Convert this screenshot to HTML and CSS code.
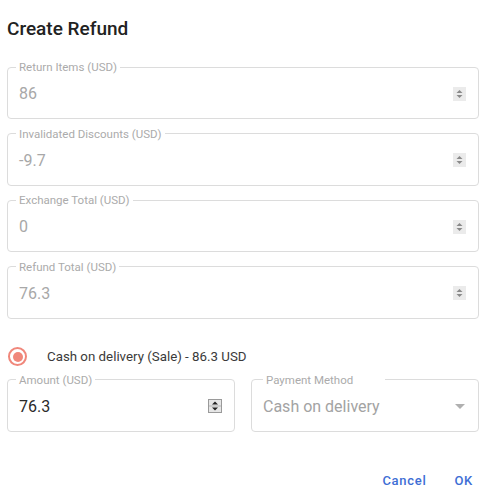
FILE: index.html
```html
<!DOCTYPE html>
<html>
<head>
<meta charset="utf-8">
<link rel="stylesheet" href="styles.css">
</head>
<body>
<div class="dialog">
  <h2 class="title">Create Refund</h2>
  <div class="fields">
    <fieldset class="field disabled">
      <legend>Return Items (USD)</legend>
      <div class="row"><span class="value">86</span>
        <svg class="spin" width="13" height="14" viewBox="0 0 13 14"><rect width="13" height="14" fill="#ebebeb"/><path d="M3.5 6 L6.5 3 L9.5 6Z" fill="#8a8a8a"/><path d="M3.5 8 L6.5 11 L9.5 8Z" fill="#8a8a8a"/></svg>
      </div>
    </fieldset>
    <fieldset class="field disabled">
      <legend>Invalidated Discounts (USD)</legend>
      <div class="row"><span class="value">-9.7</span>
        <svg class="spin" width="13" height="14" viewBox="0 0 13 14"><rect width="13" height="14" fill="#ebebeb"/><path d="M3.5 6 L6.5 3 L9.5 6Z" fill="#8a8a8a"/><path d="M3.5 8 L6.5 11 L9.5 8Z" fill="#8a8a8a"/></svg>
      </div>
    </fieldset>
    <fieldset class="field disabled">
      <legend>Exchange Total (USD)</legend>
      <div class="row"><span class="value">0</span>
        <svg class="spin" width="13" height="14" viewBox="0 0 13 14"><rect width="13" height="14" fill="#ebebeb"/><path d="M3.5 6 L6.5 3 L9.5 6Z" fill="#8a8a8a"/><path d="M3.5 8 L6.5 11 L9.5 8Z" fill="#8a8a8a"/></svg>
      </div>
    </fieldset>
    <fieldset class="field disabled">
      <legend>Refund Total (USD)</legend>
      <div class="row"><span class="value">76.3</span>
        <svg class="spin" width="13" height="14" viewBox="0 0 13 14"><rect width="13" height="14" fill="#ebebeb"/><path d="M3.5 6 L6.5 3 L9.5 6Z" fill="#8a8a8a"/><path d="M3.5 8 L6.5 11 L9.5 8Z" fill="#8a8a8a"/></svg>
      </div>
    </fieldset>
  </div>

  <div class="radio-row">
    <span class="radio"><span class="dot"></span></span>
    <span class="radio-label">Cash on delivery (Sale) - 86.3 USD</span>
  </div>

  <div class="pay-row">
    <fieldset class="field">
      <legend>Amount (USD)</legend>
      <div class="row"><span class="value active">76.3</span>
        <svg class="spin" width="14" height="14" viewBox="0 0 14 14"><rect x="0.5" y="0.5" width="13" height="13" fill="#e6e6e6" stroke="#9a9a9a"/><line x1="1" y1="7" x2="13" y2="7" stroke="#b5b5b5"/><path d="M4 5.5 L7 2.5 L10 5.5Z" fill="#222"/><path d="M4 8.5 L7 11.5 L10 8.5Z" fill="#222"/></svg>
      </div>
    </fieldset>
    <fieldset class="field select disabled">
      <legend>Payment Method</legend>
      <div class="row"><span class="value sel">Cash on delivery</span>
        <svg class="arrow" width="10" height="5" viewBox="0 0 10 5"><path d="M0 0 L10 0 L5 5Z" fill="#b0b0b0"/></svg>
      </div>
    </fieldset>
  </div>

  <div class="actions">
    <button class="btn">Cancel</button>
    <button class="btn">OK</button>
  </div>
</div>
</body>
</html>
```

FILE: styles.css
```css
html, body {
  margin: 0;
  padding: 0;
  background: #ffffff;
}
body {
  font-family: Roboto, "Liberation Sans", sans-serif;
  color: #333;
}
.dialog {
  width: 472px;
  padding: 17px 0 0 7px;
}
.title {
  margin: 0;
  font-size: 19px;
  line-height: 24px;
  font-weight: 500;
  color: #222;
}
.fields {
  margin-top: 19px;
  display: flex;
  flex-direction: column;
  gap: 7.5px;
}
.field {
  margin: 0;
  min-width: 0;
  padding: 0 12px 5px 8px;
  border: 1px solid #dcdcdc;
  border-radius: 4px;
  box-sizing: border-box;
}
.field legend {
  padding: 0 3px;
  font-size: 11.5px;
  line-height: 14px;
  color: #ababab;
  font-weight: 400;
}
.row {
  height: 39px;
  display: flex;
  align-items: center;
  justify-content: space-between;
  padding-left: 3px;
}
.value {
  font-size: 16px;
  color: #a8a8a8;
}
.value.active {
  color: #2a2a2a;
}
.value.sel {
  font-weight: 400;
  color: #a3a3a3;
}
.spin {
  display: block;
}
.radio-row {
  margin-top: 28px;
  height: 20px;
  display: flex;
  align-items: center;
}
.radio {
  width: 19px;
  height: 19px;
  margin-left: 1px;
  border: 2px solid #f0877b;
  border-radius: 50%;
  box-sizing: border-box;
  display: flex;
  align-items: center;
  justify-content: center;
}
.dot {
  width: 10px;
  height: 10px;
  border-radius: 50%;
  background: #f0877b;
}
.radio-label {
  margin-left: 20px;
  font-size: 13.3px;
  color: #3a3a3a;
}
.pay-row {
  margin-top: 6px;
  display: grid;
  grid-template-columns: 228px 228px;
  gap: 16px;
}
.select {
  padding-left: 11px;
}
.select legend {
  padding-right: 32px;
}
.select .row {
  padding-left: 0;
  padding-right: 1px;
}
.arrow {
  display: block;
}
.actions {
  margin-top: 31px;
  display: flex;
  justify-content: flex-end;
  gap: 28px;
  padding-right: 6px;
}
.btn {
  border: none;
  background: none;
  padding: 0;
  height: 36px;
  font-family: Roboto, "Liberation Sans", sans-serif;
  font-size: 13px;
  font-weight: 500;
  letter-spacing: 0.7px;
  color: #3e6ed5;
  cursor: pointer;
}
```
